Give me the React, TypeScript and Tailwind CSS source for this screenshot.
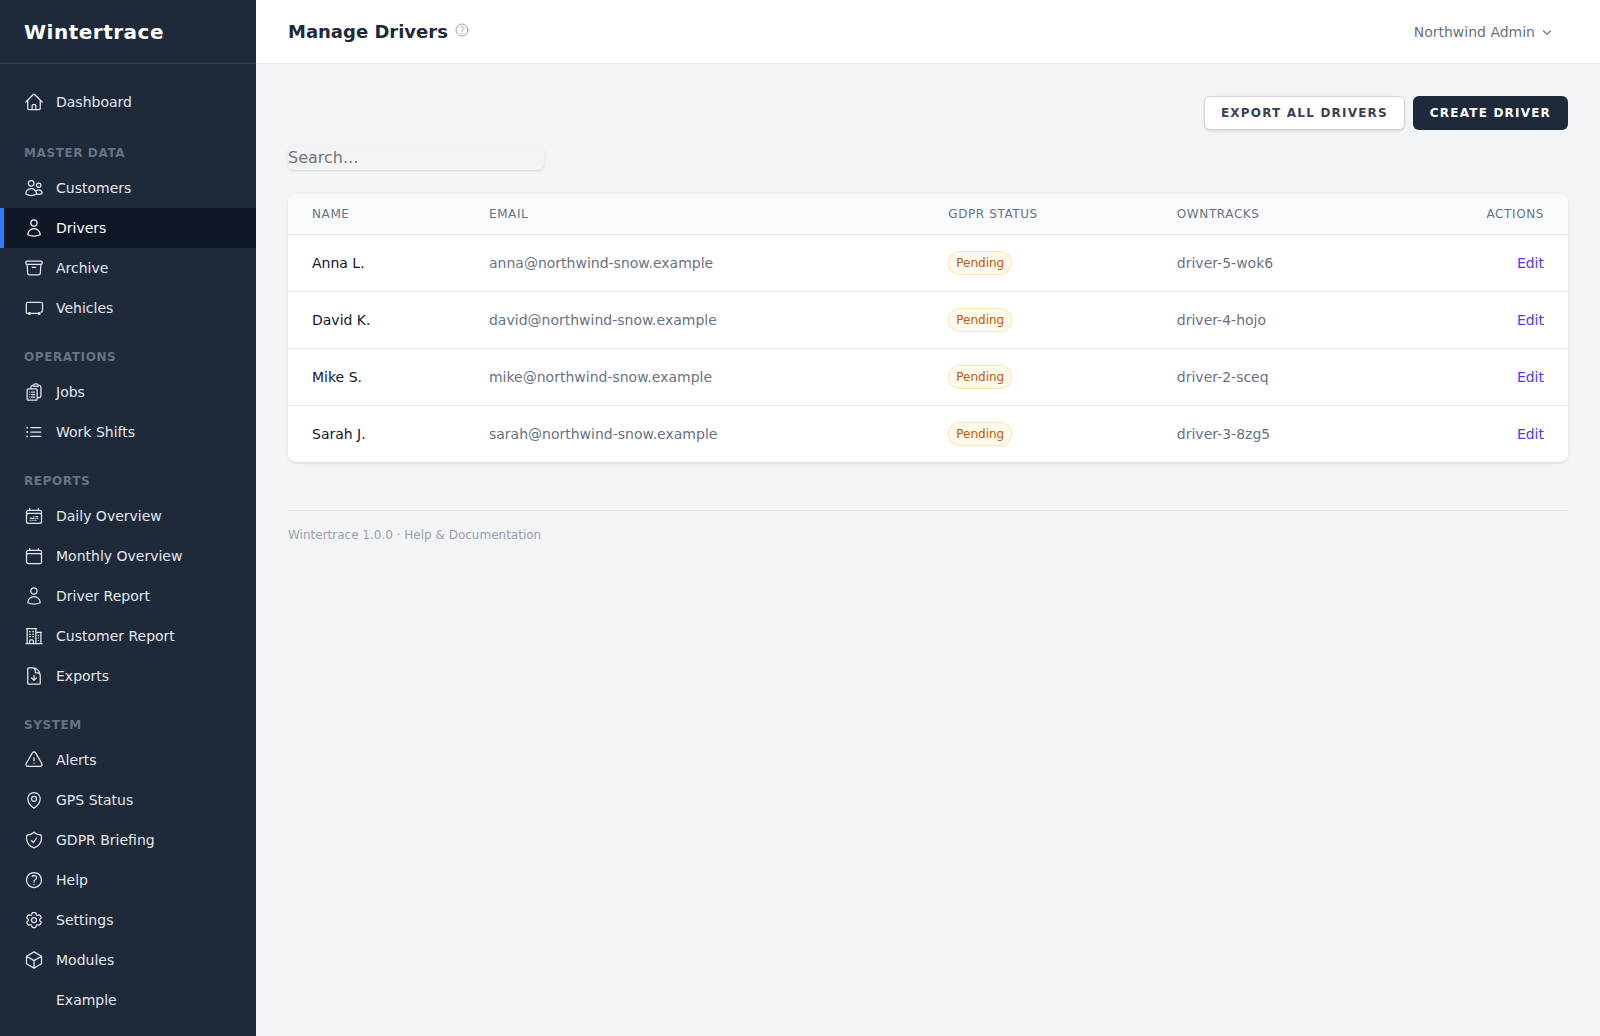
import React from 'react';
import { IconType } from 'react-icons';
import {
  HiOutlineHome,
  HiOutlineUsers,
  HiOutlineUser,
  HiOutlineArchiveBox,
  HiOutlineClipboardDocumentList,
  HiOutlineListBullet,
  HiOutlineCalendarDateRange,
  HiOutlineCalendar,
  HiOutlineBuildingOffice2,
  HiOutlineDocumentArrowDown,
  HiOutlineExclamationTriangle,
  HiOutlineMapPin,
  HiOutlineShieldCheck,
  HiOutlineQuestionMarkCircle,
  HiOutlineCog6Tooth,
  HiOutlineCube,
  HiMiniChevronDown,
} from 'react-icons/hi2';

const VehicleIcon = ({ className }: { className?: string }) => (
  <svg viewBox="0 0 24 24" fill="none" stroke="currentColor" strokeWidth={1.5} strokeLinecap="round" strokeLinejoin="round" className={className}>
    <path d="M2.8 17V7a1.75 1.75 0 0 1 1.75-1.75h15.9A1.75 1.75 0 0 1 22.2 7v8.2a1.75 1.75 0 0 1-1.75 1.75" />
    <path d="M2.8 17c0 .8.6 1.5 1.5 1.5h14" />
    <circle cx="6.6" cy="18.6" r="1.1" fill="currentColor" />
    <circle cx="18.2" cy="18.6" r="1.1" fill="currentColor" />
  </svg>
);

type NavItem = { label: string; icon?: IconType | typeof VehicleIcon; active?: boolean };
type NavGroup = { title?: string; items: NavItem[] };

const groups: NavGroup[] = [
  { items: [{ label: 'Dashboard', icon: HiOutlineHome }] },
  {
    title: 'Master Data',
    items: [
      { label: 'Customers', icon: HiOutlineUsers },
      { label: 'Drivers', icon: HiOutlineUser, active: true },
      { label: 'Archive', icon: HiOutlineArchiveBox },
      { label: 'Vehicles', icon: VehicleIcon },
    ],
  },
  {
    title: 'Operations',
    items: [
      { label: 'Jobs', icon: HiOutlineClipboardDocumentList },
      { label: 'Work Shifts', icon: HiOutlineListBullet },
    ],
  },
  {
    title: 'Reports',
    items: [
      { label: 'Daily Overview', icon: HiOutlineCalendarDateRange },
      { label: 'Monthly Overview', icon: HiOutlineCalendar },
      { label: 'Driver Report', icon: HiOutlineUser },
      { label: 'Customer Report', icon: HiOutlineBuildingOffice2 },
      { label: 'Exports', icon: HiOutlineDocumentArrowDown },
    ],
  },
  {
    title: 'System',
    items: [
      { label: 'Alerts', icon: HiOutlineExclamationTriangle },
      { label: 'GPS Status', icon: HiOutlineMapPin },
      { label: 'GDPR Briefing', icon: HiOutlineShieldCheck },
      { label: 'Help', icon: HiOutlineQuestionMarkCircle },
      { label: 'Settings', icon: HiOutlineCog6Tooth },
      { label: 'Modules', icon: HiOutlineCube },
      { label: 'Example' },
    ],
  },
];

const drivers = [
  { name: 'Anna L.', email: 'anna@northwind-snow.example', device: 'driver-5-wok6' },
  { name: 'David K.', email: 'david@northwind-snow.example', device: 'driver-4-hojo' },
  { name: 'Mike S.', email: 'mike@northwind-snow.example', device: 'driver-2-sceq' },
  { name: 'Sarah J.', email: 'sarah@northwind-snow.example', device: 'driver-3-8zg5' },
];

const Sidebar = () => (
  <aside className="flex h-screen w-64 shrink-0 flex-col overflow-hidden bg-gray-800">
    <div className="flex h-16 shrink-0 items-center border-b border-gray-700 px-6">
      <span className="text-xl font-bold tracking-wide text-white">Wintertrace</span>
    </div>
    <nav className="flex flex-col pt-[18px]">
      {groups.map((group, i) => (
        <div key={i} className={group.title ? 'mt-[21px]' : 'mb-0.5'}>
          {group.title && (
            <div className="mb-[7px] px-6 text-xs font-semibold uppercase leading-4 tracking-wider text-gray-500">
              {group.title}
            </div>
          )}
          {group.items.map((item) => {
            const Icon = item.icon;
            return (
              <a
                key={item.label}
                className={
                  item.active
                    ? 'flex h-10 items-center gap-3 border-l-4 border-blue-500 bg-gray-900 pl-5 text-sm text-white'
                    : 'flex h-10 items-center gap-3 px-6 text-sm text-gray-200'
                }
              >
                {Icon ? <Icon className="h-5 w-5 shrink-0" /> : <span className="h-5 w-5 shrink-0" />}
                {item.label}
              </a>
            );
          })}
        </div>
      ))}
    </nav>
  </aside>
);

const App = () => {
  return (
    <div className="flex h-screen bg-gray-100 font-['DejaVu_Sans',sans-serif]">
      <Sidebar />
      <div className="flex min-w-0 flex-1 flex-col">
        <header className="flex h-16 shrink-0 items-center justify-between border-b border-gray-200 bg-white pl-8 pr-[45px]">
          <div className="flex items-center gap-1.5">
            <h1 className="text-lg font-bold text-gray-800">Manage Drivers</h1>
            <HiOutlineQuestionMarkCircle className="mb-1 h-4 w-4 text-gray-400" />
          </div>
          <div className="flex items-center gap-1 text-sm text-gray-500">
            Northwind Admin
            <HiMiniChevronDown className="h-4 w-4" />
          </div>
        </header>

        <main className="flex-1 px-8 pt-8">
          <div className="flex justify-end gap-2">
            <button className="h-[34px] rounded-md border border-gray-300 bg-white px-4 text-xs font-bold uppercase tracking-widest text-gray-700 shadow-sm">
              Export all drivers
            </button>
            <button className="h-[34px] rounded-md border border-transparent bg-gray-800 px-4 text-xs font-bold uppercase tracking-widest text-white">
              Create driver
            </button>
          </div>

          <input
            placeholder="Search..."
            className="mt-4 block h-6 w-64 rounded-md bg-transparent text-base shadow-sm outline-none placeholder:text-[#757575]"
          />

          <div className="mt-6 overflow-hidden rounded-lg bg-white shadow">
            <table className="w-full">
              <thead className="bg-gray-50">
                <tr className="border-b border-gray-200">
                  <th className="h-10 px-6 text-left text-xs font-medium uppercase tracking-wider text-gray-500">Name</th>
                  <th className="h-10 px-6 text-left text-xs font-medium uppercase tracking-wider text-gray-500">Email</th>
                  <th className="h-10 px-6 text-left text-xs font-medium uppercase tracking-wider text-gray-500">GDPR Status</th>
                  <th className="h-10 px-6 text-left text-xs font-medium uppercase tracking-wider text-gray-500">OwnTracks</th>
                  <th className="h-10 px-6 text-right text-xs font-medium uppercase tracking-wider text-gray-500">Actions</th>
                </tr>
              </thead>
              <tbody>
                {drivers.map((d, i) => (
                  <tr key={d.name} className={i < drivers.length - 1 ? 'border-b border-gray-200' : ''}>
                    <td className="h-[57px] px-6 text-sm text-gray-900">{d.name}</td>
                    <td className="h-[57px] px-6 text-sm text-gray-500">{d.email}</td>
                    <td className="h-[57px] px-6">
                      <span className="inline-flex rounded-full bg-amber-50 px-2 py-1 text-xs leading-4 text-[#c2570c] ring-1 ring-inset ring-[#fde3b5]">
                        Pending
                      </span>
                    </td>
                    <td className="h-[57px] px-6 text-sm text-gray-500">{d.device}</td>
                    <td className="h-[57px] px-6 text-right text-sm text-indigo-600">Edit</td>
                  </tr>
                ))}
              </tbody>
            </table>
          </div>

          <footer className="mt-12 border-t border-gray-200 pt-4 text-xs text-gray-400">
            Wintertrace 1.0.0 · Help &amp; Documentation
          </footer>
        </main>
      </div>
    </div>
  );
};

export default App;
